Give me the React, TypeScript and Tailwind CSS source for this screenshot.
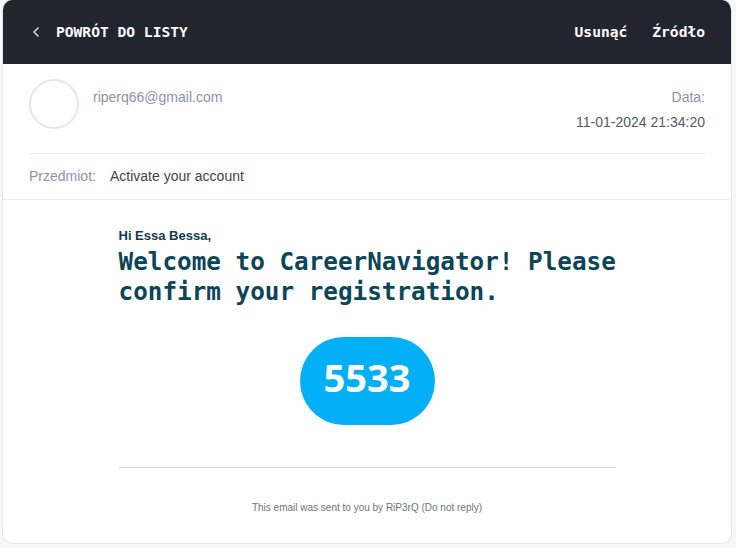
import React from "react";
import { ChevronLeft } from "lucide-react";

const mono = { fontFamily: '"DejaVu Sans Mono", "Liberation Mono", monospace' };
const sans = { fontFamily: '"Liberation Sans", Arial, sans-serif' };

const App: React.FC = () => {
  return (
    <div className="w-[736px] h-[548px] bg-[#f7f7fa] pl-[2px] pr-[4px] pb-[4px]">
      <div className="h-full bg-white border border-[#e4e4ef] border-t-0 rounded-[10px] overflow-hidden flex flex-col">
        {/* Top bar */}
        <div className="h-[64px] shrink-0 bg-[#22252d] flex items-center justify-between pl-[25px] pr-[26px]" style={mono}>
          <div className="flex items-center gap-[12px]">
            <ChevronLeft size={16} strokeWidth={2.5} className="text-[#d0d2d8]" />
            <span className="text-white font-bold text-[14.6px]">POWRÓT DO LISTY</span>
          </div>
          <div className="flex items-center gap-[25px] text-white font-bold text-[14.6px]">
            <span>Usunąć</span>
            <span>Źródło</span>
          </div>
        </div>

        {/* Sender info */}
        <div className="px-[26px]" style={sans}>
          <div className="flex justify-between pt-[15px] pb-[20px] border-b border-[#ececf0]">
            <div className="flex gap-[14px]">
              <div className="w-[50px] h-[50px] rounded-full border-2 border-[#e6e6f0]" />
              <span className="text-[14px] text-[#8b93a7] mt-[8px]">riperq66@gmail.com</span>
            </div>
            <div className="flex flex-col items-end pt-[8px] gap-[4px] text-[14px]">
              <span className="text-[#8b93a7]">Data:</span>
              <span className="text-[#555a64]">11-01-2024 21:34:20</span>
            </div>
          </div>
          <div className="flex items-center h-[45px] text-[14px]">
            <span className="text-[#8b93a7] w-[81px]">Przedmiot:</span>
            <span className="text-[#3f434b]">Activate your account</span>
          </div>
        </div>

        {/* Email body */}
        <div className="border-t border-[#ececf0] flex-1">
          <div className="w-[497px] mx-auto pt-[28px]">
            <p className="text-[13px] font-bold text-[#0f3b4d] leading-[16px]" style={sans}>Hi Essa Bessa,</p>
            <h1 className="w-[505px] text-[24.3px] font-bold text-[#0b4557] leading-[30px] mt-[3px]" style={mono}>
              Welcome to CareerNavigator! Please confirm your registration.
            </h1>
            <div className="flex justify-center mt-[30px]">
              <div
                className="w-[135px] h-[88px] rounded-full bg-[#03aff7] flex items-center justify-center pb-[8px] text-white font-bold text-[38px]"
                style={{ fontFamily: '"Open Sans", "Noto Sans", sans-serif' }}
              >
                5533
              </div>
            </div>
            <div className="border-t border-[#dcdce0] mt-[42px]" />
            <p className="text-center text-[10px] text-[#6f7378] mt-[32px]" style={sans}>
              This email was sent to you by RiP3rQ (Do not reply)
            </p>
          </div>
        </div>
      </div>
    </div>
  );
};

export default App;
